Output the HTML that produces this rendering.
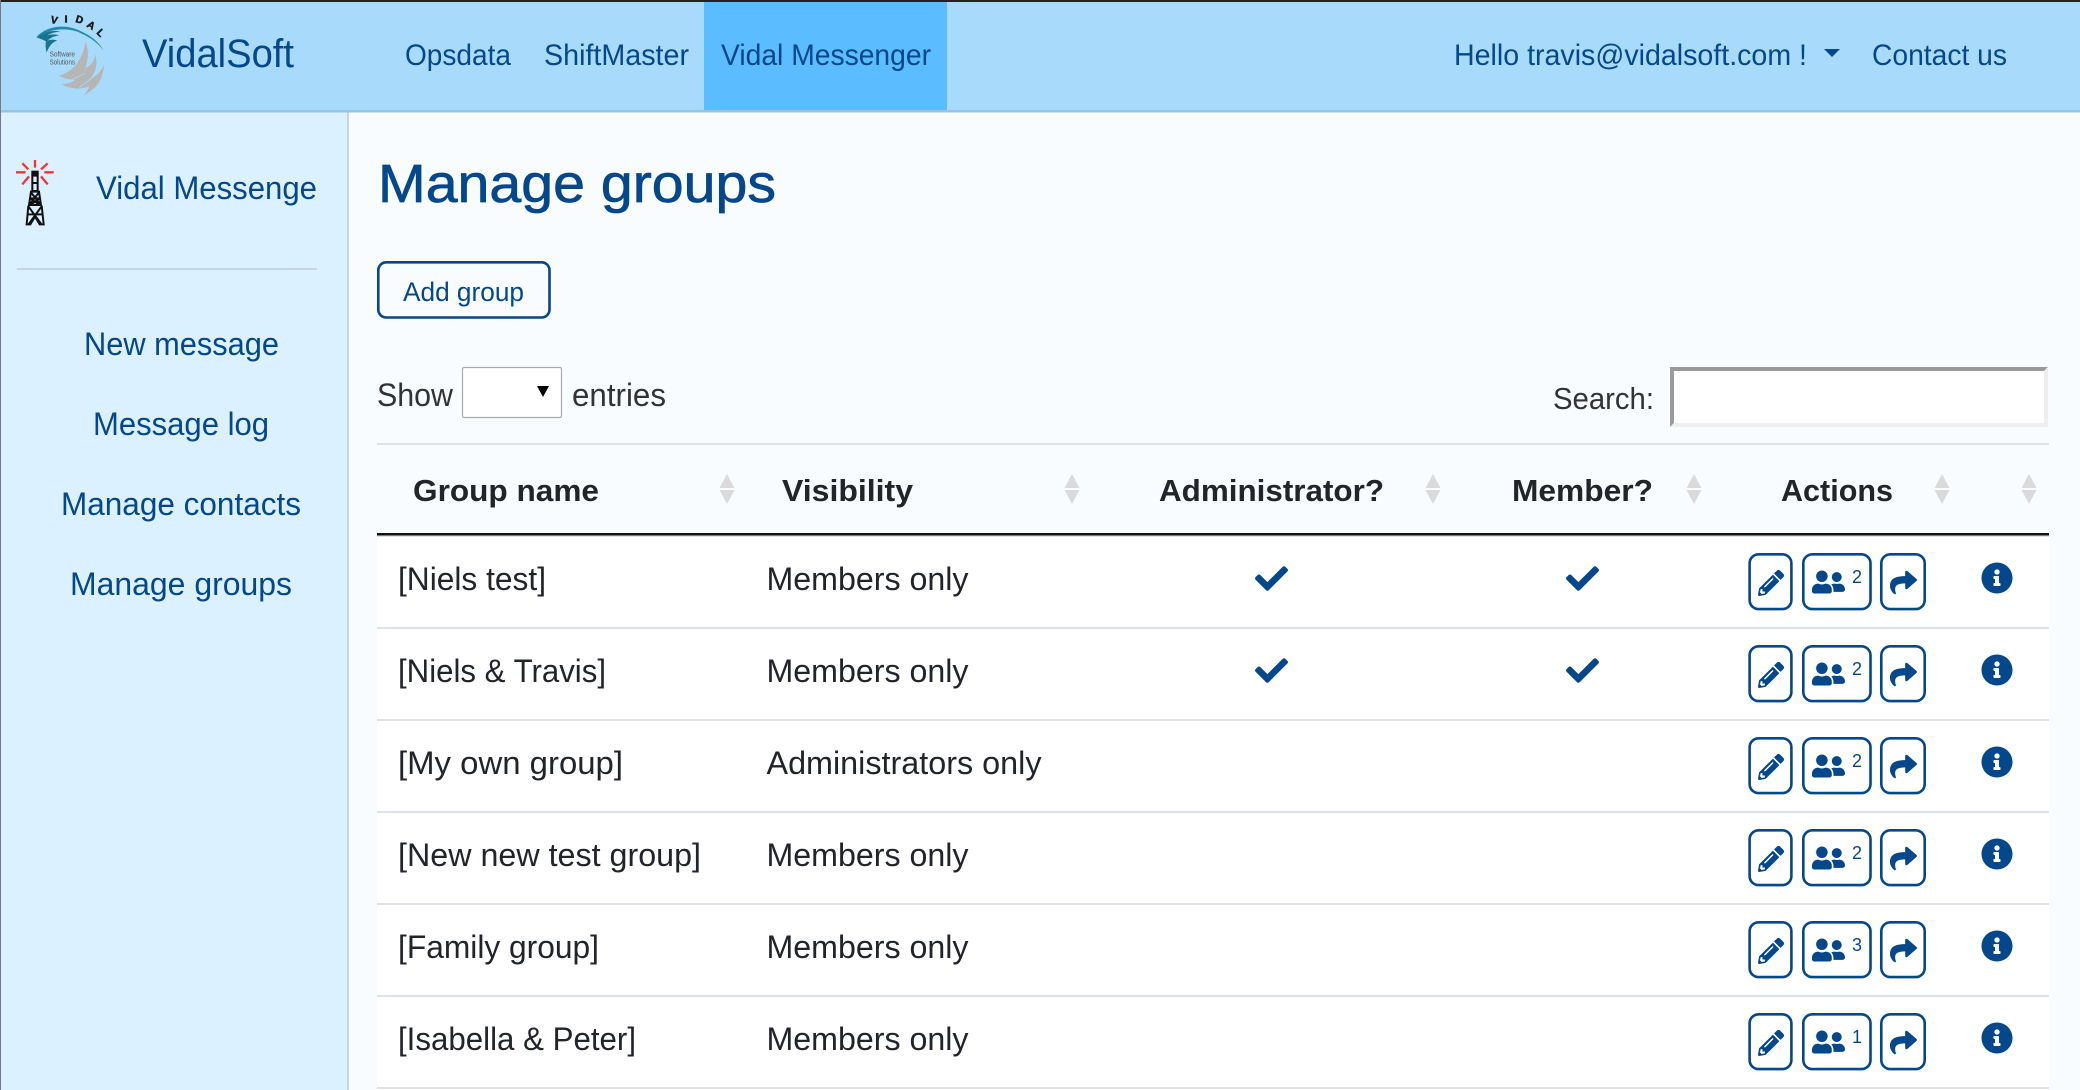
<!DOCTYPE html>
<html lang="en">
<head>
<meta charset="utf-8">
<title>Manage groups - VidalSoft</title>
<style>
html,body{margin:0;padding:0;width:2080px;height:1090px;overflow:hidden;background:#f8fcff}
svg{display:block;position:absolute;left:0;top:0}
text{font-family:"Liberation Sans",sans-serif;font-size:32px;fill:#212529}
.b{fill:#04478a}
.h{font-weight:bold;font-size:31px;fill:#212529}
.btn{fill:none;stroke:#04478a;stroke-width:2.6px}
.ic{fill:#04478a}
.ar{fill:#dadada}
.lg{font-size:31px;font-weight:bold;fill:#1c1c1c;stroke:#1c1c1c;stroke-width:1.5px}
</style>
</head>
<body>
<svg width="2080" height="1090" viewBox="0 0 2080 1090" xmlns="http://www.w3.org/2000/svg">
<defs>
<symbol id="pencil" viewBox="0 0 512 512"><path class="ic" d="M497.9 142.1l-46.1 46.1c-4.7 4.7-12.3 4.7-17 0l-111-111c-4.7-4.7-4.7-12.3 0-17l46.1-46.1c18.7-18.7 49.1-18.7 67.9 0l60.1 60.1c18.8 18.7 18.8 49.1 0 67.9zM284.2 99.8L21.6 362.4.4 483.9c-2.9 16.4 11.4 30.6 27.8 27.8l121.5-21.3 262.6-262.6c4.7-4.7 4.7-12.3 0-17l-111-111c-4.8-4.7-12.4-4.7-17.1 0zM124.1 339.9c-5.5-5.5-5.5-14.3 0-19.8l154-154c5.5-5.5 14.3-5.5 19.8 0s5.5 14.3 0 19.8l-154 154c-5.5 5.5-14.3 5.5-19.8 0zM88 424h48v36.3l-64.5 11.3-31.1-31.1L51.7 376H88v48z"/></symbol>
<symbol id="users" viewBox="0 0 640 512"><path class="ic" d="M192 256c61.9 0 112-50.1 112-112S253.9 32 192 32 80 82.1 80 144s50.1 112 112 112zm76.8 32h-8.3c-20.8 10-43.9 16-68.5 16s-47.6-6-68.5-16h-8.3C51.6 288 0 339.6 0 403.2V432c0 26.5 21.5 48 48 48h288c26.5 0 48-21.5 48-48v-28.8c0-63.6-51.6-115.2-115.2-115.2zM480 256c53 0 96-43 96-96s-43-96-96-96-96 43-96 96 43 96 96 96zm48 32h-3.8c-13.9 4.8-28.6 8-44.2 8s-30.3-3.2-44.2-8H432c-20.4 0-39.2 5.9-55.7 15.4 24.4 26.3 39.7 61.2 39.7 99.8v38.4c0 2.2-.5 4.3-.6 6.4H592c26.5 0 48-21.5 48-48 0-61.9-50.1-112-112-112z"/></symbol>
<symbol id="share" viewBox="0 0 512 512"><path class="ic" d="M503.691 189.836L327.687 37.851C312.281 24.546 288 35.347 288 56.015v80.053C127.371 137.907 0 170.1 0 322.326c0 61.441 39.581 122.309 83.333 154.132 13.653 9.931 33.111-2.533 28.077-18.631C66.066 312.814 132.917 274.316 288 272.085V360c0 20.7 24.3 31.453 39.687 18.164l176.004-152c11.071-9.562 11.086-26.753 0-36.328z"/></symbol>
<symbol id="info" viewBox="0 0 512 512"><path class="ic" d="M256 8C119.043 8 8 119.083 8 256c0 136.997 111.043 248 248 248s248-111.003 248-248C504 119.083 392.957 8 256 8zm0 110c23.196 0 42 18.804 42 42s-18.804 42-42 42-42-18.804-42-42 18.804-42 42-42zm56 254c0 6.627-5.373 12-12 12h-88c-6.627 0-12-5.373-12-12v-24c0-6.627 5.373-12 12-12h12v-64h-12c-6.627 0-12-5.373-12-12v-24c0-6.627 5.373-12 12-12h64c6.627 0 12 5.373 12 12v100h12c6.627 0 12 5.373 12 12v24z"/></symbol>
<symbol id="check" viewBox="0 0 512 512"><path class="ic" d="M173.898 439.404l-166.4-166.4c-9.997-9.997-9.997-26.206 0-36.204l36.203-36.204c9.997-9.998 26.207-9.998 36.204 0L192 312.69 432.095 72.596c9.997-9.997 26.207-9.997 36.204 0l36.203 36.204c9.997 9.997 9.997 26.206 0 36.204l-294.4 294.401c-9.998 9.997-26.207 9.997-36.204-.001z"/></symbol>
<g id="acts">
<rect class="btn" x="1749.6" y="554.3" width="41.8" height="54.8" rx="9"/>
<rect class="btn" x="1803.3" y="554.3" width="67.2" height="54.8" rx="9"/>
<rect class="btn" x="1881.3" y="554.3" width="43.4" height="54.8" rx="9"/>
<use href="#pencil" x="1758" y="570" width="26" height="26"/>
<use href="#users" x="1812" y="562" width="33" height="40"/>
<use href="#share" x="1890" y="569" width="27" height="27"/>
<use href="#info" x="1981" y="562" width="32" height="32"/>
</g>
<g id="arrow"><path class="ar" d="M0 -15L7.5 -1H-7.5Z"/><path class="ar" d="M-7.5 1H7.5L0 15Z"/></g>
</defs>

<!-- backgrounds -->
<rect x="0" y="0" width="2080" height="1090" fill="#f8fcff"/>
<rect x="0" y="112" width="347" height="978" fill="#dbf1ff"/>
<rect x="347" y="112" width="2" height="978" fill="#c3d6e2"/>
<rect x="0" y="0" width="2080" height="110" fill="#a8dbfb"/>
<rect x="0" y="110" width="2080" height="2.5" fill="#94c5e3"/>
<rect x="704" y="2" width="243" height="108" fill="#5bbcff"/>
<rect x="0" y="0" width="2080" height="2" fill="#222"/>
<rect x="0" y="0" width="1" height="1090" fill="#778"/>

<!-- logo -->
<g transform="translate(20 10) scale(.3333)">
<path d="M48 82C78 50 125 42 170 58C205 72 235 92 251 122C232 96 205 78 170 64C130 52 85 58 48 82Z" fill="#2388ab"/>
<path d="M50 82C70 66 95 60 122 64C104 66 92 70 82 76C94 72 106 72 118 76C102 78 90 84 82 92C92 88 102 88 112 92C98 96 88 106 80 128C76 112 76 100 78 94C72 90 60 86 50 82Z" fill="#16758f"/>
<path d="M197 95C208 125 205 150 195 175C215 165 225 150 226 133C235 165 225 195 205 210C228 200 245 185 251 163C252 200 235 235 190 256C200 245 205 238 208 228C185 240 150 238 125 222C140 222 155 218 165 210C150 210 130 205 116 197C150 190 185 160 197 95Z" fill="#b6b6b6"/>
<path d="M178 232L212 208M150 212L195 190" stroke="#a8dbfb" stroke-width="2.5" fill="none"/>
<text x="89" y="139" style="font-size:22px;fill:#555" textLength="76" lengthAdjust="spacingAndGlyphs">Software</text>
<text x="89" y="164" style="font-size:22px;fill:#555" textLength="76" lengthAdjust="spacingAndGlyphs">Solutions</text>
<text class="lg" x="92" y="41" transform="rotate(12 104 32)">V</text>
<text class="lg" x="134" y="38">I</text>
<text class="lg" x="167" y="39" transform="rotate(16 178 30)">D</text>
<text class="lg" x="202" y="56" transform="rotate(32 213 46)">A</text>
<text class="lg" x="231" y="78" transform="rotate(46 240 70)">L</text>
</g>
<text class="b" x="142" y="67" style="font-size:40px" textLength="152" lengthAdjust="spacingAndGlyphs">VidalSoft</text>

<!-- top nav -->
<text class="b" x="405" y="65" textLength="106" lengthAdjust="spacingAndGlyphs" style="font-size:30px">Opsdata</text>
<text class="b" x="544" y="65" textLength="145" lengthAdjust="spacingAndGlyphs" style="font-size:30px">ShiftMaster</text>
<text class="b" x="721" y="65" textLength="210" lengthAdjust="spacingAndGlyphs" style="font-size:30px">Vidal Messenger</text>
<text class="b" x="1454" y="65" textLength="353" lengthAdjust="spacingAndGlyphs" style="font-size:30px">Hello travis@vidalsoft.com !</text>
<path class="b" d="M1824 49H1840L1832 57Z"/>
<text class="b" x="1872" y="65" textLength="135" lengthAdjust="spacingAndGlyphs" style="font-size:30px">Contact us</text>

<!-- sidebar -->
<g transform="translate(5 155) scale(.3333)">
<g stroke="#f5323c" stroke-width="7" fill="none">
<path d="M90 15V38M33 52H62M118 52H146M52 25L70 43M128 25L108 43M52 88L72 64M128 88L108 64"/>
</g>
<rect x="79" y="47" width="22" height="14" fill="#111"/>
<g fill="none" stroke="#111" stroke-width="6">
<path d="M82 62H98V108H82Z"/>
<path d="M82 84H98"/>
<path d="M78 110L72 150H108L102 110ZM76 130H104M78 112L106 148M102 112L74 148M76 130L104 150M104 130L76 150"/>
<path d="M70 152L65 208H76L90 185L104 208H116L110 152M68 178H112M70 154L108 206M110 154L72 206"/>
</g>
</g>
<text class="b" x="96" y="199" textLength="221" lengthAdjust="spacingAndGlyphs" style="font-size:32px">Vidal Messenge</text>
<rect x="17" y="268" width="300" height="2" fill="#c5d6e2"/>
<text class="b" x="84" y="355" textLength="195" lengthAdjust="spacingAndGlyphs" style="font-size:32px">New message</text>
<text class="b" x="93" y="435" textLength="176" lengthAdjust="spacingAndGlyphs" style="font-size:32px">Message log</text>
<text class="b" x="61" y="515" textLength="240" lengthAdjust="spacingAndGlyphs" style="font-size:32px">Manage contacts</text>
<text class="b" x="70" y="595" textLength="222" lengthAdjust="spacingAndGlyphs" style="font-size:32px">Manage groups</text>

<!-- heading -->
<text class="b" x="378" y="202" textLength="398" lengthAdjust="spacingAndGlyphs" style="font-size:54px;stroke:#04478a;stroke-width:.7px">Manage groups</text>
<rect class="btn" x="378.3" y="262.3" width="171.2" height="55.2" rx="8"/>
<text class="b" x="403" y="301" textLength="121" lengthAdjust="spacingAndGlyphs" style="font-size:27px">Add group</text>

<!-- length / search -->
<text x="377" y="406" textLength="76" lengthAdjust="spacingAndGlyphs" style="fill:#333">Show</text>
<rect x="462.5" y="367.5" width="99" height="50" rx="1.5" fill="#fff" stroke="#aaa" stroke-width="1.2"/>
<path d="M537 386H549L543 397Z" fill="#000"/>
<text x="572" y="406" textLength="94" lengthAdjust="spacingAndGlyphs" style="fill:#333">entries</text>
<text x="1553" y="409" textLength="101" lengthAdjust="spacingAndGlyphs" style="fill:#333;font-size:31px">Search:</text>
<rect x="1670" y="367" width="378" height="60" fill="#fff"/>
<path d="M1670 367H2048L2044 371H1674V423L1670 427Z" fill="#9a9a9a"/>
<path d="M2048 367V427H1670L1674 423H2044V371Z" fill="#eeeeee"/>

<!-- table -->
<rect x="377" y="443" width="1672" height="2" fill="#dee2e6"/>
<rect x="377" y="535" width="1672" height="555" fill="#fff"/>
<rect x="377" y="533" width="1672" height="2.5" fill="#111"/>
<rect x="377" y="535.5" width="1672" height="1.5" fill="#dee2e6"/>
<text class="h" x="413" y="501" textLength="186" lengthAdjust="spacingAndGlyphs">Group name</text>
<text class="h" x="782" y="501" textLength="131" lengthAdjust="spacingAndGlyphs">Visibility</text>
<text class="h" x="1159" y="501" textLength="225" lengthAdjust="spacingAndGlyphs">Administrator?</text>
<text class="h" x="1512" y="501" textLength="141" lengthAdjust="spacingAndGlyphs">Member?</text>
<text class="h" x="1781" y="501" textLength="112" lengthAdjust="spacingAndGlyphs">Actions</text>
<use href="#arrow" x="727" y="489"/>
<use href="#arrow" x="1072" y="489"/>
<use href="#arrow" x="1433" y="489"/>
<use href="#arrow" x="1694" y="489"/>
<use href="#arrow" x="1942" y="489"/>
<use href="#arrow" x="2029" y="489"/>

<!-- rows -->
<text x="398" y="590" textLength="148" lengthAdjust="spacingAndGlyphs">[Niels test]</text>
<text x="766.5" y="590" textLength="202" lengthAdjust="spacingAndGlyphs">Members only</text>
<use href="#check" x="1255" y="562" width="33" height="33"/>
<use href="#check" x="1566" y="562" width="33" height="33"/>
<use href="#acts"/>
<text x="1852" y="583" style="font-size:18px;fill:#04478a">2</text>
<rect x="377" y="627" width="1672" height="2" fill="#dee2e6"/>

<text x="398" y="682" textLength="208" lengthAdjust="spacingAndGlyphs">[Niels &amp; Travis]</text>
<text x="766.5" y="682" textLength="202" lengthAdjust="spacingAndGlyphs">Members only</text>
<use href="#check" x="1255" y="654" width="33" height="33"/>
<use href="#check" x="1566" y="654" width="33" height="33"/>
<use href="#acts" y="92"/>
<text x="1852" y="675" style="font-size:18px;fill:#04478a">2</text>
<rect x="377" y="719" width="1672" height="2" fill="#dee2e6"/>

<text x="398" y="774" textLength="225" lengthAdjust="spacingAndGlyphs">[My own group]</text>
<text x="766.5" y="774" textLength="275" lengthAdjust="spacingAndGlyphs">Administrators only</text>
<use href="#acts" y="184"/>
<text x="1852" y="767" style="font-size:18px;fill:#04478a">2</text>
<rect x="377" y="811" width="1672" height="2" fill="#dee2e6"/>

<text x="398" y="866" textLength="303" lengthAdjust="spacingAndGlyphs">[New new test group]</text>
<text x="766.5" y="866" textLength="202" lengthAdjust="spacingAndGlyphs">Members only</text>
<use href="#acts" y="276"/>
<text x="1852" y="859" style="font-size:18px;fill:#04478a">2</text>
<rect x="377" y="903" width="1672" height="2" fill="#dee2e6"/>

<text x="398" y="958" textLength="201" lengthAdjust="spacingAndGlyphs">[Family group]</text>
<text x="766.5" y="958" textLength="202" lengthAdjust="spacingAndGlyphs">Members only</text>
<use href="#acts" y="368"/>
<text x="1852" y="951" style="font-size:18px;fill:#04478a">3</text>
<rect x="377" y="995" width="1672" height="2" fill="#dee2e6"/>

<text x="398" y="1050" textLength="238" lengthAdjust="spacingAndGlyphs">[Isabella &amp; Peter]</text>
<text x="766.5" y="1050" textLength="202" lengthAdjust="spacingAndGlyphs">Members only</text>
<use href="#acts" y="460"/>
<text x="1852" y="1043" style="font-size:18px;fill:#04478a">1</text>
<rect x="377" y="1087" width="1672" height="2" fill="#dee2e6"/>
</svg>
</body>
</html>
